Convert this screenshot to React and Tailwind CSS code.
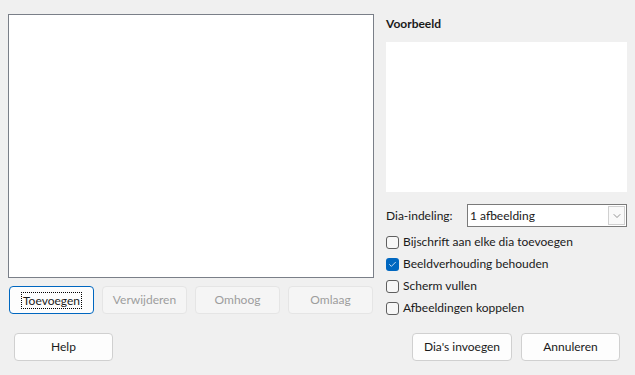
import { ChevronDown, Check } from 'lucide-react';

const FONT = { fontFamily: 'Lato, "Noto Sans", sans-serif' };

function Btn({ children, disabled, focused, className = '' }) {
  const base = 'flex h-[28px] items-center justify-center rounded-[4px] border text-[12px]';
  const look = disabled
    ? 'border-[#e5e5e5] bg-[#f5f5f5] text-[#9d9d9d]'
    : focused
      ? 'border-[#0067c0] bg-[#fdfdfd] text-[#1a1a1a]'
      : 'border-[#d0d0d0] bg-[#fdfdfd] text-[#1a1a1a]';
  return (
    <div className={`${base} ${look} ${className}`}>
      {focused
        ? <span className="border border-dotted border-black px-[1px] leading-[15px]">{children}</span>
        : children}
    </div>
  );
}

function Checkbox({ label, checked }) {
  return (
    <div className="flex h-[22px] items-center gap-[4px]">
      {checked ? (
        <span className="flex h-[13px] w-[13px] items-center justify-center rounded-[3px] bg-[#0067c0]">
          <Check size={9} strokeWidth={2} className="text-white" />
        </span>
      ) : (
        <span className="h-[13px] w-[13px] rounded-[3px] border border-[#5f5f5f] bg-[#f7f7f7]" />
      )}
      <span className="text-[12px] text-[#1a1a1a]">{label}</span>
    </div>
  );
}

export default function App() {
  return (
    <div style={FONT} className="flex h-[375px] w-[635px] flex-col bg-[#f0f0f0] px-[8px] pt-[14px]">
      <div className="flex gap-[12px]">
        {/* left: picture list */}
        <div className="flex w-[366px] flex-col">
          <div className="h-[264px] border border-[#7a7f88] bg-white" />
          <div className="mt-[8px] flex gap-[8px] pl-[1px]">
            <Btn focused className="w-[85px]">Toevoegen</Btn>
            <Btn disabled className="w-[85px]">Verwijderen</Btn>
            <Btn disabled className="w-[85px]">Omhoog</Btn>
            <Btn disabled className="w-[85px]">Omlaag</Btn>
          </div>
        </div>

        {/* right: preview + options */}
        <div className="flex flex-1 flex-col">
          <div className="mt-[1px] h-[27px] text-[12px] font-bold text-[#1a1a1a]">Voorbeeld</div>
          <div className="h-[150px] w-[241px] bg-white" />
          <div className="mt-[12px] flex items-center">
            <span className="w-[81px] text-[12px] text-[#1a1a1a]">Dia-indeling:</span>
            <div className="flex h-[23px] w-[160px] items-center border border-[#7a7a7a] bg-white">
              <span className="flex-1 pl-[2px] text-[12px] text-[#1a1a1a]">1 afbeelding</span>
              <span className="mr-[1px] flex h-[19px] w-[17px] items-center justify-center border border-[#d0d0d0] bg-[#f9f9f9]">
                <ChevronDown size={12} strokeWidth={1.25} className="text-[#555]" />
              </span>
            </div>
          </div>
          <div className="mt-[4px] flex flex-col">
            <Checkbox label="Bijschrift aan elke dia toevoegen" />
            <Checkbox label="Beeldverhouding behouden" checked />
            <Checkbox label="Scherm vullen" />
            <Checkbox label="Afbeeldingen koppelen" />
          </div>
        </div>
      </div>

      <div className="mt-[14px] flex items-center pl-[6px]">
        <Btn className="w-[99px]">Help</Btn>
        <div className="flex-1" />
        <Btn className="w-[100px]">Dia's invoegen</Btn>
        <Btn className="ml-[9px] mr-[7px] w-[99px]">Annuleren</Btn>
      </div>
    </div>
  );
}
